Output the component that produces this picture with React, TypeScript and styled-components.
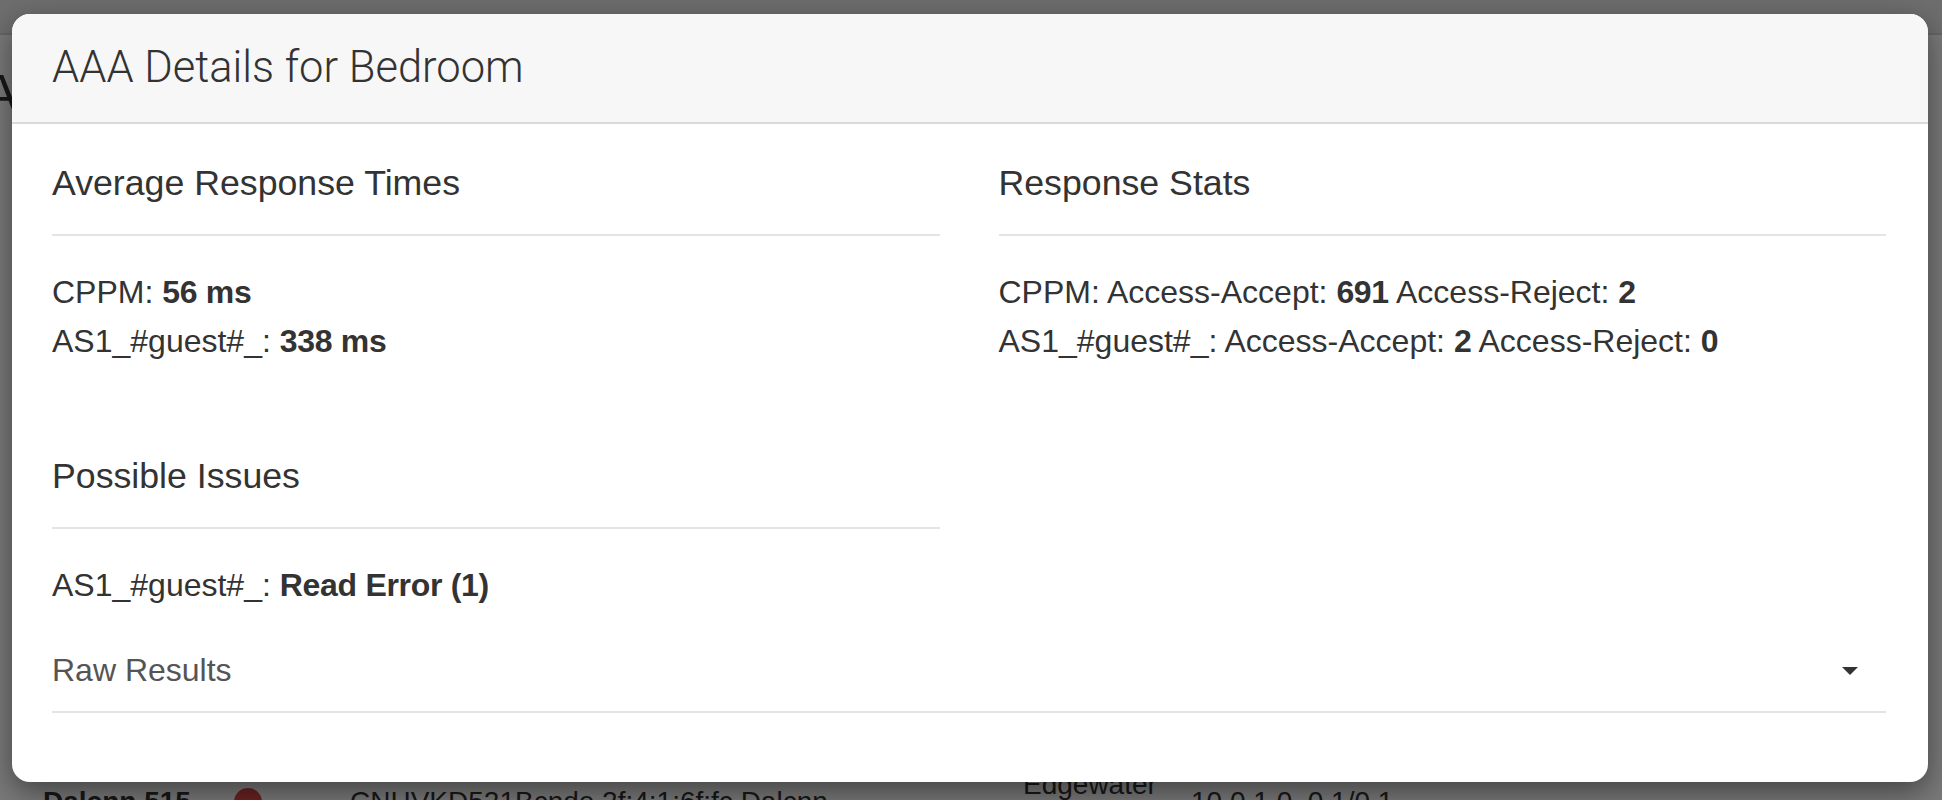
import React from "react";
import styled, { createGlobalStyle } from "styled-components";

const Global = createGlobalStyle`
  html, body {
    margin: 0;
    padding: 0;
    width: 1942px;
    height: 800px;
    overflow: hidden;
    background: #ffffff;
  }
  * { box-sizing: border-box; }
`;

const Viewport = styled.div`
  position: relative;
  width: 1942px;
  height: 800px;
  overflow: hidden;
  font-family: "Liberation Sans", Arial, sans-serif;
  color: #333;
`;

/* ---------- background page ---------- */
const Page = styled.div`
  display: flex;
  flex-direction: column;
  height: 842px;
  background: #ffffff;
`;

const Navbar = styled.div`
  height: 35px;
  background: #e6e6e6;
  border-bottom: 2px solid #d6d6d6;
  flex: none;
`;

const PageTitle = styled.h1`
  margin: 30px 0 0 -17px;
  font-size: 52px;
  line-height: 56px;
  font-weight: 400;
  color: #333;
  flex: none;
`;

const Spacer = styled.div`
  flex: 1;
`;

const TableRow = styled.div`
  display: flex;
  align-items: center;
  height: 80px;
  padding-left: 43px;
  flex: none;
  font-size: 28px;
  line-height: 34px;
  color: #333;
`;

const Cell = styled.div<{ $w?: number; $bold?: boolean }>`
  width: ${(p) => (p.$w ? `${p.$w}px` : "auto")};
  flex: none;
  font-weight: ${(p) => (p.$bold ? 700 : 400)};
  white-space: nowrap;
`;

const StatusDot = styled.span`
  display: block;
  width: 28px;
  height: 28px;
  margin-left: 1px;
  border-radius: 50%;
  background: #e04848;
`;

/* ---------- overlay + modal ---------- */
const Backdrop = styled.div`
  position: absolute;
  inset: 0;
  background: rgba(0, 0, 0, 0.52);
`;

const ModalLayer = styled.div`
  position: absolute;
  inset: 0;
  padding: 14px 14px 0 12px;
`;

const Dialog = styled.div`
  width: 1916px;
  background: #fff;
  border-radius: 18px;
  overflow: hidden;
  box-shadow: 0 10px 30px rgba(0, 0, 0, 0.45);
`;

const Header = styled.div`
  height: 110px;
  display: flex;
  align-items: center;
  padding: 0 40px;
  background: #f7f7f7;
  border-bottom: 2px solid #dadada;
`;

const Title = styled.h4`
  margin: 0;
  font-family: Roboto, "Liberation Sans", sans-serif;
  font-weight: 300;
  font-size: 43.5px;
  line-height: 50px;
  color: #333;
`;

const Body = styled.div`
  padding: 34px 42px 69px 40px;
`;

const Columns = styled.div`
  display: grid;
  grid-template-columns: 1fr 1fr;
  column-gap: 59px;
`;

const Column = styled.div`
  display: flex;
  flex-direction: column;
`;

const Section = styled.section`
  & + & {
    margin-top: 85px;
  }
`;

const Heading = styled.h5`
  margin: 0;
  font-size: 35.7px;
  line-height: 50px;
  font-weight: 400;
  color: #333;
`;

const Rule = styled.div<{ $top?: number; $bottom?: number }>`
  height: 2px;
  background: #e4e4e4;
  margin-top: ${(p) => p.$top ?? 26}px;
  margin-bottom: ${(p) => p.$bottom ?? 32}px;
`;

const Line = styled.div`
  font-size: 32px;
  line-height: 49px;
  color: #333;
  white-space: nowrap;
`;

const Strong = styled.b`
  font-weight: 700;
  letter-spacing: -0.3px;
`;

const RawRow = styled.div`
  margin-top: 36px;
  height: 49px;
  display: flex;
  align-items: center;
  justify-content: space-between;
`;

const RawLabel = styled.span`
  font-size: 32px;
  line-height: 49px;
  color: #555;
`;

const Caret = styled.span`
  width: 0;
  height: 0;
  margin-right: 28px;
  border-top: 8px solid #333;
  border-left: 8px solid transparent;
  border-right: 8px solid transparent;
`;

export default function App() {
  return (
    <Viewport>
      <Global />
      <Page>
        <Navbar />
        <PageTitle>A</PageTitle>
        <Spacer />
        <TableRow>
          <Cell $w={190} $bold>Dalcnn 515</Cell>
          <Cell $w={117}>
            <StatusDot />
          </Cell>
          <Cell $w={673}>CNHVKD521Bcnde 2f:4:1:6f:fc Dalcnn</Cell>
          <Cell $w={168}>
            Edgewater
            <br />
            Office
          </Cell>
          <Cell>10.0.1.0. 0.1/0.1</Cell>
        </TableRow>
      </Page>
      <Backdrop />
      <ModalLayer>
        <Dialog>
          <Header>
            <Title>AAA Details for Bedroom</Title>
          </Header>
          <Body>
            <Columns>
              <Column>
                <Section>
                  <Heading>Average Response Times</Heading>
                  <Rule />
                  <Line>
                    CPPM: <Strong>56 ms</Strong>
                  </Line>
                  <Line>
                    AS1_#guest#_: <Strong>338 ms</Strong>
                  </Line>
                </Section>
                <Section>
                  <Heading>Possible Issues</Heading>
                  <Rule />
                  <Line>
                    AS1_#guest#_: <Strong>Read Error (1)</Strong>
                  </Line>
                </Section>
              </Column>
              <Column>
                <Section>
                  <Heading>Response Stats</Heading>
                  <Rule />
                  <Line>
                    CPPM: Access-Accept: <Strong>691</Strong> Access-Reject:{" "}
                    <Strong>2</Strong>
                  </Line>
                  <Line>
                    AS1_#guest#_: Access-Accept: <Strong>2</Strong>{" "}
                    Access-Reject: <Strong>0</Strong>
                  </Line>
                </Section>
              </Column>
            </Columns>
            <RawRow>
              <RawLabel>Raw Results</RawLabel>
              <Caret />
            </RawRow>
            <Rule $top={15.5} $bottom={0} />
          </Body>
        </Dialog>
      </ModalLayer>
    </Viewport>
  );
}
